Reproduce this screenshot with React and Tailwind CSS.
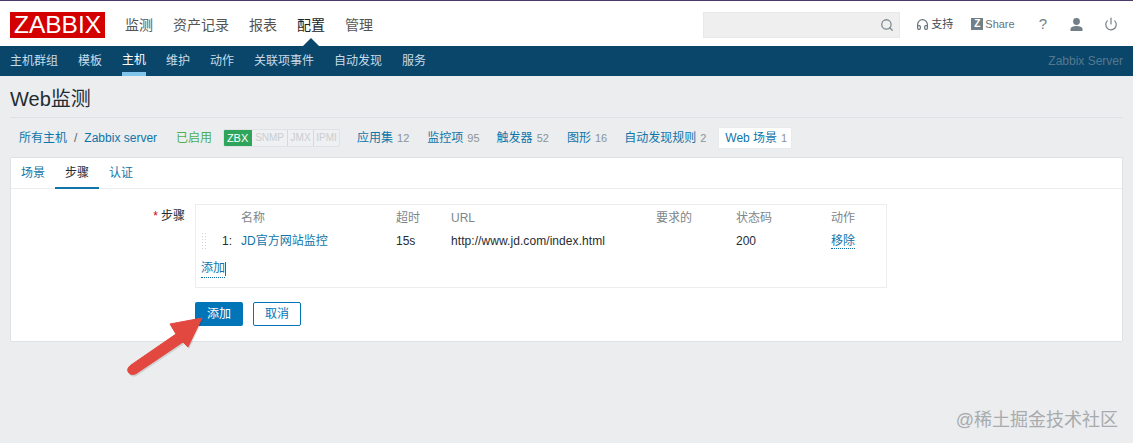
import React from "react";
import { Search, Headphones, Power } from "lucide-react";

const FF = "font-['Liberation_Sans','Noto_Sans_CJK_SC',sans-serif]";

function Count({ label, n, className = "" }) {
  return (
    <span className={"whitespace-nowrap " + className}>
      <span className="text-[#0f75a8]">{label}</span>
      <span className="text-[#8a9499] text-[11px] ml-1">{n}</span>
    </span>
  );
}

const COLS = "grid grid-cols-[40px_155px_55px_205px_80px_95px_50px]";

export default function App() {
  const mainNav = [["监测", "text-[#555]"], ["资产记录", "text-[#555]"], ["报表", "text-[#555]"], ["配置", "text-[#222]"], ["管理", "text-[#555]"]];
  const subNav = ["主机群组", "模板", "主机", "维护", "动作", "关联项事件", "自动发现", "服务"];
  return (
    <div className={"relative w-[1133px] h-[443px] overflow-hidden bg-[#ebedef] text-[12px] text-[#1f2c33] " + FF}>
      <div className="h-px bg-[#4a3b6b]" />
      {/* header */}
      <header className="h-[45px] bg-white flex items-center pl-[10px] pr-[14px]">
        <div className="w-[95px] h-[26px] bg-[#d40000] text-white text-[24.5px] leading-[26px] text-center mt-[3px]">ZABBIX</div>
        <nav className="flex ml-[20px] gap-[20px] text-[14px] mt-[3px]">
          {mainNav.map(([t, c]) => (
            <span key={t} className={c}>{t}</span>
          ))}
        </nav>
        <div className="ml-auto w-[197px] h-[26px] bg-[#efefef] border border-[#e8e8e8] flex items-center justify-end pr-[5px] mt-[3px]">
          <Search size={14} strokeWidth={2.2} className="text-[#7e8a90]" />
        </div>
        <div className="flex items-center text-[11px] text-[#65747c] mt-px ml-[16px]">
          <Headphones size={13} strokeWidth={2.2} className="text-[#65747c] mr-[2px]" />
          <span className="text-[#3f4b52]">支持</span>
          <span className="w-[12px] h-[12px] bg-[#737f86] text-white text-[10px] leading-[12px] text-center font-bold ml-[18px] mr-[2px]">Z</span>
          <span>Share</span>
          <span className="text-[15px] ml-[24px] text-[#737f86]">?</span>
          <svg className="ml-[22px]" width="15" height="15" viewBox="0 0 15 15" fill="#737f86">
            <circle cx="7.5" cy="4.5" r="3.4" />
            <path d="M1.5 14 V12 C1.5 10 4.5 9 7.5 9 C10.5 9 13.5 10 13.5 12 V14 Z" />
          </svg>
          <Power size={14} strokeWidth={2} className="text-[#737f86] ml-[20px] mr-[1px]" />
        </div>
      </header>
      {/* sub nav */}
      <div className="relative h-[30px] bg-[#0a466a] flex items-stretch pl-[10px] pr-[10px] text-[12px]">
        <div className="absolute left-[303px] top-[-8px] w-0 h-0 border-x-[8px] border-x-transparent border-b-[8px] border-b-[#0a466a]" />
        <div className="flex gap-[20px]">
          {subNav.map((t) => (
            <span key={t} className={"flex items-center leading-[28px] h-[30px] " + (t === "主机" ? "text-white border-b-[4px] border-[#7fc4ea] pt-[2px]" : "text-[#c5dcea]")}>{t}</span>
          ))}
        </div>
        <span className="ml-auto self-center text-[#56788f]">Zabbix Server</span>
      </div>
      {/* title */}
      <div className="mx-[10px] h-[42px] border-b border-[#dfe2e4] flex items-center">
        <h1 className="text-[20px] text-[#1f2c33] pt-[5px]">Web监测</h1>
      </div>
      {/* breadcrumbs */}
      <div className="h-[39px] pl-[19px] flex items-center pt-[1px] text-[12px]">
        <span className="text-[#0f75a8]">所有主机</span>
        <span className="text-[#666] mx-[7px]">/</span>
        <span className="text-[#0f75a8]">Zabbix server</span>
        <span className="text-[#4caf50] ml-[19px]">已启用</span>
        <span className="flex ml-[11px] h-[16px] rounded-[2px] overflow-hidden text-[10px] leading-[16px] text-[#c9ced1] bg-[#eef0f1] border border-[#dfe2e4] box-content -my-px">
          <span className="bg-[#2fa55c] text-white w-[29px] text-center -my-px -ml-px leading-[18px] text-[11px]">ZBX</span>
          <span className="w-[36px] text-center border-r border-[#d5d9dc]">SNMP</span>
          <span className="w-[26px] text-center border-r border-[#d5d9dc]">JMX</span>
          <span className="w-[25px] text-center">IPMI</span>
        </span>
        <Count label="应用集" n="12" className="ml-[17px]" />
        <Count label="监控项" n="95" className="ml-[18px]" />
        <Count label="触发器" n="52" className="ml-[17px]" />
        <Count label="图形" n="16" className="ml-[18px]" />
        <Count label="自动发现规则" n="2" className="ml-[17px]" />
        <span className="ml-[12px] w-[74px] h-[22px] bg-white border border-[#e8eaec] pl-[6px] flex items-center whitespace-nowrap">
          <span className="text-[#0f75a8]">Web 场景</span>
          <span className="text-[#8a9499] text-[11px] ml-1">1</span>
        </span>
      </div>
      {/* panel */}
      <div className="mx-[10px] h-[185px] bg-white border border-[#dfe2e4] rounded-[1px]">
        <div className="h-[31px] border-b border-[#ebeef0] flex pl-[5px]">
          <span className="px-[5px] flex items-center text-[#0f75a8] h-[30px]">场景</span>
          <span className="ml-[5px] w-[44px] justify-center flex items-center text-[#1f2c33] h-[31px] border-b-[2px] border-[#0f75a8]">步骤</span>
          <span className="ml-[10px] flex items-center text-[#0f75a8] h-[30px]">认证</span>
        </div>
        <div className="flex pt-[15px]">
          <div className="w-[184px] pr-[10px] text-right pt-[3px]">
            <span className="text-[#d40000] mr-[3px]">*</span>步骤
          </div>
          <div>
            <div className="w-[692px] h-[84px] border border-[#ebeef0] pl-[5px] pt-[4px]">
              <div className={COLS + " h-[16px] items-center text-[#7d868b] text-[12px]"}>
                <span />
                <span>名称</span>
                <span>超时</span>
                <span>URL</span>
                <span>要求的</span>
                <span>状态码</span>
                <span>动作</span>
              </div>
              <div className={COLS + " h-[24px] mt-[4px] items-center"}>
                <span className="flex items-center justify-between pr-[9px]">
                  <span className="w-[6px] h-[19px] bg-[radial-gradient(#cfd4d7_1px,transparent_1px)] bg-[length:3px_3px]" />
                  <span>1:</span>
                </span>
                <span className="text-[#0f75a8]">JD官方网站监控</span>
                <span>15s</span>
                <span className="tracking-[0.07px]">http://www.jd.com/index.html</span>
                <span />
                <span>200</span>
                <span><span className="text-[#0f75a8] border-b border-dotted border-[#0f75a8]">移除</span></span>
              </div>
              <div className="mt-[6px] flex items-center">
                <span className="text-[#0f75a8] border-b border-dotted border-[#0f75a8]">添加</span>
                <span className="w-px h-[14px] bg-[#0f75a8]" />
              </div>
            </div>
            <div className="flex gap-[10px] mt-[14px]">
              <button className="w-[48px] h-[24px] bg-[#0275b8] text-white rounded-[2px]">添加</button>
              <button className="w-[48px] h-[24px] bg-white text-[#0275b8] border border-[#0275b8] rounded-[2px]">取消</button>
            </div>
          </div>
        </div>
      </div>
      {/* annotation arrow */}
      <svg className="absolute left-[120px] top-[315px]" width="90" height="70" viewBox="0 0 90 70">
        <path d="M82 3 L50 9 L56 19 L11 50 C7 53 7 56 9 58 C11 60 14 60 17 58 L63 27 L68 32 Z" fill="#000" opacity="0.12" transform="translate(1 2)" />
        <path d="M82 3 L50 9 L56 19 L11 50 C7 53 7 56 9 58 C11 60 14 60 17 58 L63 27 L68 32 Z" fill="#e2483f" stroke="#e2483f" strokeWidth="1" strokeLinejoin="round" />
      </svg>
      {/* watermark */}
      <div className="absolute right-[15px] bottom-[9px] text-[18px] text-[#a8abad]">@稀土掘金技术社区</div>
    </div>
  );
}
